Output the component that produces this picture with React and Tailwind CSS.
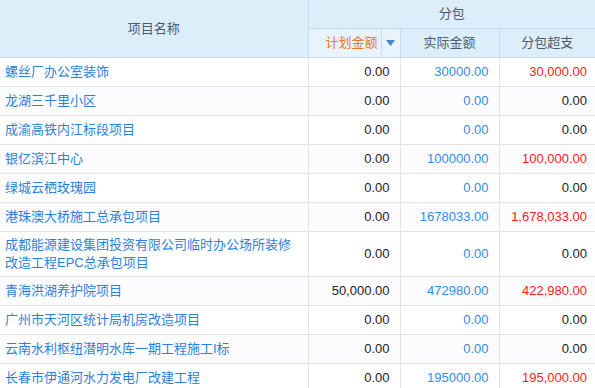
const rows = [
  { name: '螺丝厂办公室装饰', plan: '0.00', actual: '30000.00', over: '30,000.00' },
  { name: '龙湖三千里小区', plan: '0.00', actual: '0.00', over: '0.00' },
  { name: '成渝高铁内江标段项目', plan: '0.00', actual: '0.00', over: '0.00' },
  { name: '银亿滨江中心', plan: '0.00', actual: '100000.00', over: '100,000.00' },
  { name: '绿城云栖玫瑰园', plan: '0.00', actual: '0.00', over: '0.00' },
  { name: '港珠澳大桥施工总承包项目', plan: '0.00', actual: '1678033.00', over: '1,678,033.00' },
  { name: '成都能源建设集团投资有限公司临时办公场所装修改造工程EPC总承包项目', plan: '0.00', actual: '0.00', over: '0.00' },
  { name: '青海洪湖养护院项目', plan: '50,000.00', actual: '472980.00', over: '422,980.00' },
  { name: '广州市天河区统计局机房改造项目', plan: '0.00', actual: '0.00', over: '0.00' },
  { name: '云南水利枢纽潜明水库一期工程施工I标', plan: '0.00', actual: '0.00', over: '0.00' },
  { name: '长春市伊通河水力发电厂改建工程', plan: '0.00', actual: '195000.00', over: '195,000.00' },
];

export default function App() {
  return (
    <div
      className="w-[595px] h-[388px] overflow-hidden bg-white text-[13px]"
      style={{ fontFamily: '"Liberation Sans", "Noto Sans CJK SC", sans-serif' }}
    >
      <table className="w-[595px] table-fixed border-collapse">
        <colgroup>
          <col className="w-[308px]" />
          <col className="w-[92px]" />
          <col className="w-[99px]" />
          <col className="w-[96px]" />
        </colgroup>
        <thead className="text-[#4b5b6d]">
          <tr>
            <th rowSpan={2} className="bg-[#ddeefb] border-r border-b border-[#c6dcef] font-normal">
              项目名称
            </th>
            <th colSpan={3} className="h-[28px] p-0 bg-[#ddeefb] border-b border-[#c6dcef] font-normal">
              分包
            </th>
          </tr>
          <tr>
            <th className="h-[28px] bg-[#e8f3fd] border-r border-b border-[#c6dcef] font-normal p-0">
              <div className="flex h-[28px] items-center">
                <span className="flex-1 text-right pr-[3px] text-[#e8781c]">计划金额</span>
                <span className="flex h-full w-[19px] items-center justify-center border-l border-[#c6dcef]">
                  <svg width="9" height="6" viewBox="0 0 9 6">
                    <path d="M0 0h9L4.5 6z" fill="#3d87d4" />
                  </svg>
                </span>
              </div>
            </th>
            <th className="h-[28px] p-0 bg-[#ddeefb] border-r border-b border-[#c6dcef] font-normal">实际金额</th>
            <th className="h-[28px] p-0 bg-[#ddeefb] border-b border-[#c6dcef] font-normal">分包超支</th>
          </tr>
        </thead>
        <tbody>
          {rows.map((r, i) => (
            <tr key={r.name} className={i % 2 ? 'bg-[#fcfcfe]' : 'bg-white'}>
              <td className="h-[29px] border-b border-r border-[#e3e3e3] px-[5px] py-[4px] text-[#2b7fe0] leading-[18px] break-all">
                {r.name}
              </td>
              <td className="border-b border-r border-[#e3e3e3] pr-[10px] text-right text-[#222]">{r.plan}</td>
              <td className="border-b border-r border-[#e3e3e3] pr-[10px] text-right text-[#2f8cf0]">{r.actual}</td>
              <td className="border-b border-[#e3e3e3] pr-[8px] text-right">
                <span className={r.over === '0.00' ? 'text-[#222]' : 'text-[#ff1a1a]'}>{r.over}</span>
              </td>
            </tr>
          ))}
        </tbody>
      </table>
    </div>
  );
}
